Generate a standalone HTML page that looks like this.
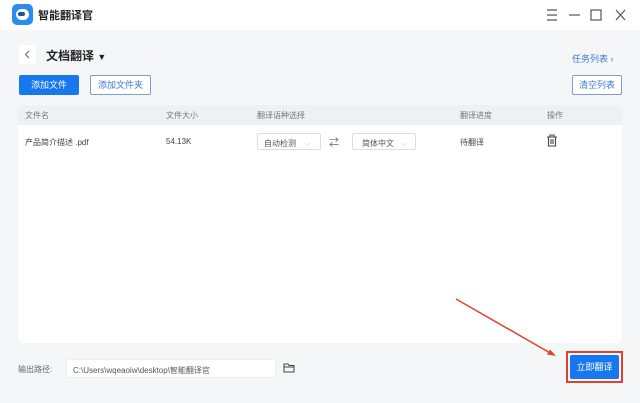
<!DOCTYPE html>
<html><head><meta charset="utf-8"><style>
*{margin:0;padding:0;box-sizing:border-box}
body{width:640px;height:403px;background:#f5f6f8;font-family:"Liberation Sans","Noto Sans CJK SC",sans-serif;position:relative;overflow:hidden;color:#333}
.abs{position:absolute}
.t{font-size:8px;color:#444;white-space:nowrap}
</style></head><body>
<div class="abs" style="left:0;top:0;width:640px;height:30px;background:#fff"></div>
<div class="abs" style="left:12px;top:4px;width:21px;height:21px;border-radius:5px;background:#2a8cf0"></div>
<div class="abs" style="left:16px;top:9px;width:13px;height:11px;border-radius:6px;background:#fff"></div>
<div class="abs" style="left:18px;top:12px;width:7px;height:4px;border-radius:2px;background:#1d4fa0"></div>
<div class="abs" style="left:38px;top:7px;font-size:11px;font-weight:bold;color:#222">智能翻译官</div>
<svg class="abs" style="left:540px;top:6px" width="100" height="18" fill="none" stroke="#555" stroke-width="1.2">
<path d="M7 4h10M7 9h10M7 14h10"/><path d="M29 9h11"/><rect x="51" y="4" width="10" height="10"/><path d="M76 4l9 10M85 4l-9 10"/></svg>
<div class="abs" style="left:19px;top:45px;width:17px;height:19px;background:#fff"></div>
<svg class="abs" style="left:19px;top:45px" width="17" height="19" fill="none" stroke="#666" stroke-width="1"><path d="M10 6l-3.5 3.5L10 13"/></svg>
<div class="abs" style="left:46px;top:47px;font-size:12px;font-weight:bold;color:#222">文档翻译 <span style="font-size:9px">▼</span></div>
<div class="abs" style="left:572px;top:52px;font-size:9px;color:#3a7bd5">任务列表 ›</div>
<div class="abs" style="left:19px;top:75px;width:60px;height:20px;background:#1677ef;border-radius:2px;color:#fff;font-size:9px;text-align:center;line-height:20px">添加文件</div>
<div class="abs" style="left:90px;top:75px;width:61px;height:20px;border:1px solid #7a9fd0;border-radius:2px;background:#fff;color:#3a7bd5;font-size:9px;text-align:center;line-height:18px">添加文件夹</div>
<div class="abs" style="left:572px;top:75px;width:50px;height:20px;border:1px solid #7a9fd0;border-radius:2px;background:#fff;color:#3a7bd5;font-size:9px;text-align:center;line-height:18px">清空列表</div>
<div class="abs" style="left:18px;top:105px;width:604px;height:238px;background:#fff;border-radius:6px;overflow:hidden">
<div style="height:20px;background:#eff0f3"></div></div>
<div class="abs t" style="left:25px;top:110px;color:#777">文件名</div>
<div class="abs t" style="left:166px;top:110px;color:#777">文件大小</div>
<div class="abs t" style="left:257px;top:110px;color:#777">翻译语种选择</div>
<div class="abs t" style="left:460px;top:110px;color:#777">翻译进度</div>
<div class="abs t" style="left:547px;top:110px;color:#777">操作</div>
<div class="abs t" style="left:25px;top:137px">产品简介描述 .pdf</div>
<div class="abs t" style="left:166px;top:137px">54.13K</div>
<div class="abs t" style="left:257px;top:133px;width:64px;height:17px;border:1px solid #ddd;border-radius:2px;padding:4px 0 0 6px;color:#555">自动检测 <span style="color:#bbb;margin-left:6px">⌵</span></div>
<div class="abs" style="left:329px;top:134px;font-size:10px;color:#666">⇄</div>
<div class="abs t" style="left:352px;top:133px;width:64px;height:17px;border:1px solid #ddd;border-radius:2px;padding:4px 0 0 9px;color:#555">简体中文 <span style="color:#bbb;margin-left:5px">⌵</span></div>
<div class="abs t" style="left:460px;top:137px">待翻译</div>
<svg class="abs" style="left:546px;top:134px" width="12" height="13" fill="none" stroke="#444" stroke-width="1.1"><path d="M1 3h10M4 3V1h4v2M2.5 3v9h7V3M5 5v5M7 5v5"/></svg>
<div class="abs t" style="left:18px;top:364px;color:#666">输出路径:</div>
<div class="abs t" style="left:66px;top:359px;width:210px;height:19px;background:#fff;border:1px solid #eee;border-radius:2px;padding:5px 0 0 6px;color:#555">C:\Users\wqeaoiw\desktop\智能翻译官</div>
<svg class="abs" style="left:283px;top:363px" width="12" height="10" fill="none" stroke="#444" stroke-width="1"><path d="M1 1h4l1 1.5h5V9H1z M1 4h10"/></svg>
<svg class="abs" style="left:0;top:0" width="640" height="403"><path d="M456 299L552 354" stroke="#e0412d" stroke-width="1.5"/><path d="M556 356l-9-1.5 3-5z" fill="#e0412d"/></svg>
<div class="abs" style="left:566px;top:351px;width:57px;height:32px;border:2px solid #e0412d"></div>
<div class="abs" style="left:570px;top:355px;width:49px;height:24px;background:#1677ef;border-radius:2px;color:#fff;font-size:9px;text-align:center;line-height:24px">立即翻译</div>
</body></html>
